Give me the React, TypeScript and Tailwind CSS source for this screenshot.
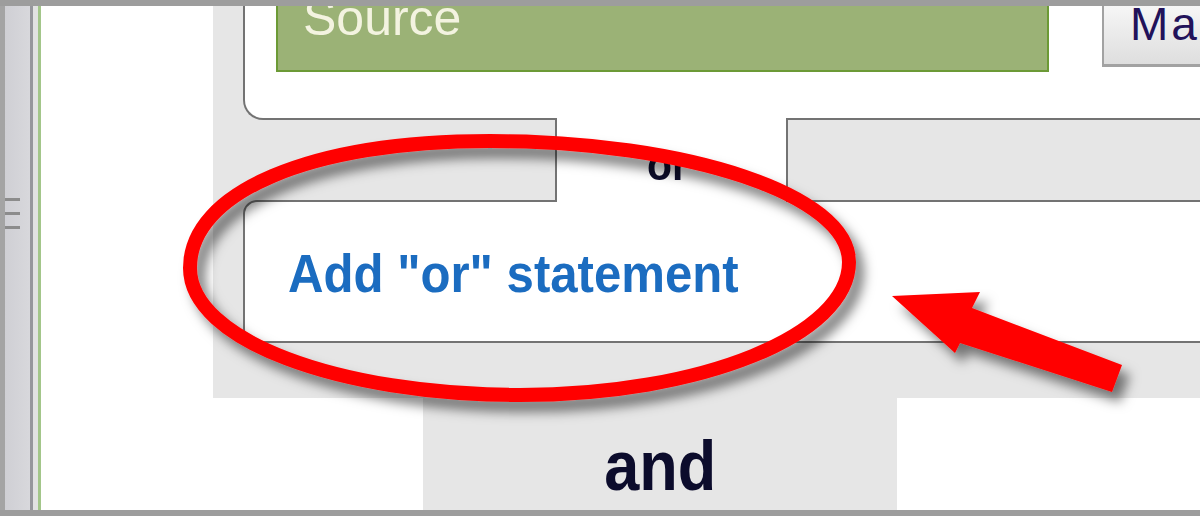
export default function App() {
  const line = 'border-[#737373]'

  return (
    <div className="relative w-[1200px] h-[516px] overflow-hidden bg-white flex flex-col font-['Liberation_Sans',Arial,sans-serif]">
      <div className="h-[6px] shrink-0 bg-[#9d9d9d]" />

      <div className="flex h-[504px] shrink-0">
        {/* side panel edge */}
        <div className="w-[5px] shrink-0 bg-[#a4a4a4]" />
        <div className="w-[25px] shrink-0 bg-gradient-to-r from-[#cfcfd4] to-[#d8d8dc] flex flex-col items-start gap-[11px] pt-[192px]">
          <div className="w-[15px] h-[3px] bg-[#8c8c8c] blur-[0.5px]" />
          <div className="w-[15px] h-[3px] bg-[#8c8c8c] blur-[0.5px]" />
          <div className="w-[15px] h-[3px] bg-[#8c8c8c] blur-[0.5px]" />
        </div>
        <div className="w-[3px] shrink-0 bg-[#96969c]" />
        <div className="w-[5px] shrink-0 bg-[#e2e2e2]" />
        <div className="w-[3px] shrink-0 bg-[#a3c68a]" />
        <div className="w-[2px] shrink-0 bg-white" />
        <div className="w-[170px] shrink-0 bg-white" />

        {/* rule editor */}
        <div className="w-[987px] shrink-0 flex flex-col">
          <div className="h-[392px] shrink-0 bg-[#e6e6e6] pl-[30px] flex flex-col">
            <div className={`h-[114px] shrink-0 bg-white border-l-2 border-b-2 ${line} rounded-bl-[20px] flex items-start`}>
              <div className="ml-[31px] w-[773px] h-[66px] shrink-0 bg-[#9bb276] border-2 border-t-0 border-[#6c9a36] overflow-hidden pl-[25px]">
                <div className="-mt-[13px] text-[50px] leading-none text-[#f3f3e0]">Source</div>
              </div>
              <div className="ml-[53px] w-[130px] h-[61px] shrink-0 bg-gradient-to-b from-[#f6f6f6] to-[#dedede] border-l-2 border-b-[3px] border-[#a2a2a2] overflow-hidden pl-[26px]">
                <div className="-mt-[5px] text-[46px] leading-none tracking-[3px] text-[#22125a] whitespace-nowrap">Mat</div>
              </div>
            </div>

            <div className="h-[80px] shrink-0 flex">
              <div className="w-[312px] shrink-0" />
              <div className={`w-[233px] shrink-0 -my-[2px] relative z-10 bg-white border-x-2 ${line} pt-[24px] pr-[8px] text-center`}>
                <span className="inline-block scale-x-[0.91] text-[45px] leading-none font-bold text-[#0c0c2c]">or</span>
              </div>
              <div className="flex-1" />
            </div>

            <div className={`h-[143px] shrink-0 bg-white border-l-2 border-y-2 ${line} rounded-l-[14px] pl-[43px] pt-[44px]`}>
              <span className="inline-block origin-left scale-x-[0.91] text-[54px] leading-none font-bold text-[#1b6cc0] whitespace-nowrap">
                Add "or" statement
              </span>
            </div>

            <div className="h-[55px] shrink-0" />
          </div>

          <div className="h-[112px] shrink-0 flex">
            <div className="w-[210px] shrink-0 bg-white" />
            <div className="w-[474px] shrink-0 bg-[#e6e6e6] pt-[33px] text-center">
              <span className="inline-block scale-x-[0.9] text-[70px] leading-none font-bold text-[#0c0c2c]">and</span>
            </div>
            <div className="flex-1 bg-white" />
          </div>
        </div>
      </div>

      <div className="h-[6px] shrink-0 bg-[#9d9d9d]" />

      {/* annotation */}
      <svg className="absolute inset-0 z-20 pointer-events-none" width="1200" height="516" viewBox="0 0 1200 516">
        <defs>
          <filter id="drop" x="-10%" y="-20%" width="130%" height="150%">
            <feDropShadow dx="8" dy="10" stdDeviation="6" floodColor="#000" floodOpacity="0.5" />
          </filter>
        </defs>
        <path
          d="M190 268 C190 192 310 141 490 141 C688 141 849 195 849 262 C849 335 702 395 520 395 C338 395 190 340 190 268 Z"
          fill="none"
          stroke="#ff0000"
          strokeWidth="14"
          filter="url(#drop)"
        />
        <polygon
          points="892,296 980,292 972,308 1122,365 1112,392 960,343 955,353"
          fill="#ff0000"
          filter="url(#drop)"
        />
      </svg>
    </div>
  )
}
